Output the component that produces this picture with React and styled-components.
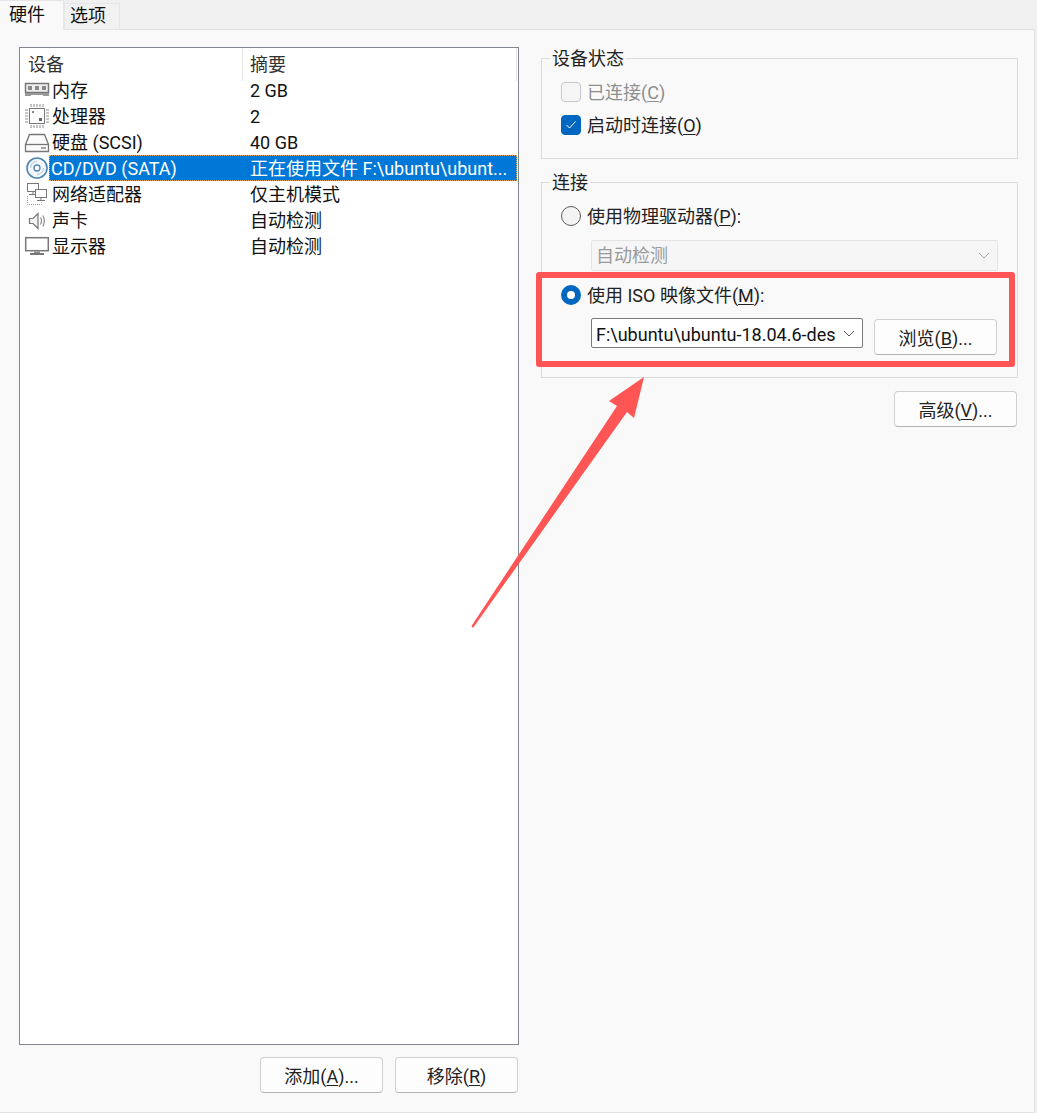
import React from "react";
import styled, { createGlobalStyle } from "styled-components";

const GlobalStyle = createGlobalStyle`
  html, body {
    margin: 0;
    padding: 0;
    background: #f0f0f0;
  }
  * {
    box-sizing: border-box;
  }
`;

const FONT = `Roboto, "Noto Sans CJK SC", sans-serif`;

const Page = styled.div`
  position: relative;
  width: 1037px;
  height: 1113px;
  display: flex;
  flex-direction: column;
  overflow: hidden;
  background: #f0f0f0;
  color: #111;
  font-family: ${FONT};
  font-size: 18px;
  line-height: 24px;
`;

const TabStrip = styled.div`
  height: 30px;
  display: flex;
  align-items: flex-end;
  margin-bottom: -1px;
  position: relative;
  z-index: 1;
`;

const Tab = styled.div`
  height: ${(p) => (p.$active ? "30px" : "27px")};
  width: ${(p) => (p.$active ? "64px" : "56px")};
  padding-left: ${(p) => (p.$active ? "9px" : "5px")};
  background: ${(p) => (p.$active ? "#f9f9f9" : "#f1f1f1")};
  border: 1px solid #e6e6e6;
  border-left-width: ${(p) => (p.$active ? "0" : "1px")};
  border-bottom: ${(p) => (p.$active ? "none" : "1px solid #e6e6e6")};
  line-height: ${(p) => (p.$active ? "27px" : "24px")};
`;

const Panel = styled.div`
  flex: 1;
  min-height: 0;
  margin-right: 2px;
  display: flex;
  gap: 22px;
  padding: 17px 16px 19px 19px;
  background: #f9f9f9;
  border-top: 1px solid #e2e2e2;
  border-bottom: 1px solid #e2e2e2;
  border-right: 1px solid #e2e2e2;
`;

const LeftColumn = styled.div`
  width: 500px;
  display: flex;
  flex-direction: column;
  gap: 12px;
`;

const RightColumn = styled.div`
  width: 477px;
  padding-top: 1px;
  display: flex;
  flex-direction: column;
  align-items: flex-end;
`;

const DeviceList = styled.div`
  flex: 1;
  background: #fff;
  border: 1px solid #82878f;
`;

const ListHeader = styled.div`
  height: 29px;
  display: grid;
  grid-template-columns: 222px 275px;
  margin-right: 1px;
`;

const HeaderCell = styled.div`
  padding-left: ${(p) => (p.$first ? "8px" : "7px")};
  border-left: ${(p) => (p.$first ? "none" : "1px solid #e5e5e5")};
  border-right: ${(p) => (p.$first ? "none" : "1px solid #e5e5e5")};
  color: #333;
  line-height: 33px;
`;

const Row = styled.div`
  height: 26px;
  display: flex;
  padding-right: 1px;
`;

const IconCell = styled.div`
  width: 29px;
  padding-left: 4px;
  flex: none;

  svg {
    display: block;
  }
`;

const RowBody = styled.div`
  flex: 1;
  display: grid;
  grid-template-columns: 193px 275px;
  height: 26px;
  line-height: 28px;
  background: ${(p) => (p.$selected ? "#0078d7" : "transparent")};
  color: ${(p) => (p.$selected ? "#fff" : "#111")};
  outline: ${(p) => (p.$selected ? "1px dotted #e8a860" : "none")};
  outline-offset: -1px;
`;

const NameCell = styled.div`
  padding-left: ${(p) => (p.$selected ? "2px" : "3px")};
  white-space: nowrap;
`;

const SummaryCell = styled.div`
  padding-left: 8px;
  white-space: nowrap;
  overflow: hidden;
`;

const ButtonRow = styled.div`
  display: flex;
  justify-content: flex-end;
  gap: 12px;
  padding-right: 1px;
`;

const Button = styled.div`
  width: 123px;
  height: 36px;
  padding-top: 3px;
  flex: none;
  display: flex;
  align-items: center;
  justify-content: center;
  background: #fdfdfd;
  border: 1px solid #d0d0d0;
  border-bottom-color: #b4b4b4;
  border-radius: 4px;
  color: #222;
`;

const Group = styled.fieldset`
  width: 100%;
  margin: 0 0 13px;
  padding: 14px 19px ${(p) => p.$bottom}px;
  border: 1px solid #dcdcdc;
  min-width: 0;
`;

const Legend = styled.legend`
  margin-left: -11px;
  padding: 0 2px;
  height: 20px;
  line-height: 22px;
  color: #222;
`;

const OptionRow = styled.div`
  height: 20px;
  display: flex;
  align-items: center;
  gap: 6px;
  margin-bottom: ${(p) => p.$gap || 0}px;
  color: ${(p) => (p.$disabled ? "#8f8f8f" : "#222")};
  white-space: pre;
`;

const OptionLabel = styled.span`
  padding-top: 2px;
`;

const CheckBox = styled.span`
  width: 20px;
  height: 20px;
  flex: none;
  display: flex;
  align-items: center;
  justify-content: center;
  border-radius: 4px;
  background: ${(p) => (p.$checked ? "#0067c0" : "#f6f6f6")};
  border: 1px solid ${(p) => (p.$checked ? "#0067c0" : "#c8c8c8")};
`;

const Radio = styled.span`
  width: 20px;
  height: 20px;
  flex: none;
  border-radius: 50%;
  background: ${(p) => (p.$checked ? "#fff" : "#f3f3f3")};
  border: ${(p) => (p.$checked ? "6px solid #0067c0" : "1px solid #5c5c5c")};
`;

const DisabledSelect = styled.div`
  width: 407px;
  height: 31px;
  margin: 0 0 14px 30px;
  padding: 0 7px 0 4px;
  display: flex;
  align-items: center;
  justify-content: space-between;
  background: #f6f6f6;
  border: 1px solid #e4e4e4;
  border-radius: 2px;
  color: #9a9a9a;
`;

const FileRow = styled.div`
  display: flex;
  align-items: flex-start;
  gap: 11px;
  margin: 13px 0 0 30px;
`;

const FileSelect = styled.div`
  width: 272px;
  height: 30px;
  padding: 0 7px 0 4px;
  flex: none;
  display: flex;
  align-items: center;
  justify-content: space-between;
  background: #fff;
  border: 1px solid #7a7a7a;
  border-radius: 2px;
  color: #111;
`;

const FileValue = styled.span`
  width: 239px;
  padding-top: 3px;
  overflow: hidden;
  white-space: nowrap;
`;

const BrowseButton = styled(Button)`
  margin-top: 1px;
`;

const AdvancedButton = styled(Button)`
  margin-right: 1px;
`;

const Key = styled.span`
  text-decoration: underline;
  text-underline-offset: 2px;
`;

const Highlight = styled.div`
  position: absolute;
  left: 536px;
  top: 272px;
  width: 479px;
  height: 95px;
  border: 6px solid #ff5555;
  border-radius: 3px;
  pointer-events: none;
`;

const ArrowOverlay = styled.svg`
  position: absolute;
  left: 0;
  top: 0;
  pointer-events: none;
`;

const Chevron = ({ color }) => (
  <svg width="12" height="7" viewBox="0 0 12 7" fill="none">
    <path d="M1 1l5 5 5-5" stroke={color} strokeWidth="1" />
  </svg>
);

const MemoryIcon = () => (
  <svg width="26" height="26" viewBox="0 0 26 26" fill="none">
    <rect x="1.5" y="6.5" width="23" height="9" fill="#eee" stroke="#777" strokeWidth="1.5" />
    <rect x="4" y="9" width="4" height="4" fill="#888" />
    <rect x="11" y="9" width="4" height="4" fill="#888" />
    <rect x="18" y="9" width="4" height="4" fill="#888" />
    <path d="M1 16h24v3H19v-1H7v1H1z" fill="#999" />
  </svg>
);

const CpuIcon = () => (
  <svg width="26" height="26" viewBox="0 0 26 26" fill="none">
    <rect x="5.5" y="5.5" width="15" height="15" fill="#fff" stroke="#777" />
    <path d="M1 7h3M1 10h3M1 13h3M1 16h3M1 19h3M22 7h3M22 10h3M22 13h3M22 16h3M22 19h3M7 1v3M10 1v3M13 1v3M16 1v3M19 1v3M7 22v3M10 22v3M13 22v3M16 22v3M19 22v3" stroke="#8a8a8a" />
    <rect x="8" y="8" width="2" height="2" fill="#888" />
    <rect x="15" y="15" width="3" height="3" fill="#666" />
  </svg>
);

const DiskIcon = () => (
  <svg width="26" height="26" viewBox="0 0 26 26" fill="none">
    <path d="M5.5 5.5h15l4 10v7h-23v-7z" fill="#fbfbfb" stroke="#777" strokeWidth="1.3" />
    <path d="M2 15.5h22" stroke="#777" strokeWidth="1.3" />
    <path d="M17 19h5" stroke="#888" strokeWidth="1.5" />
  </svg>
);

const CdIcon = () => (
  <svg width="26" height="26" viewBox="0 0 26 26" fill="none">
    <circle cx="13" cy="13" r="10" fill="#f4f8fb" stroke="#4d86b5" strokeWidth="1.6" />
    <circle cx="13" cy="13" r="3" fill="#fff" stroke="#4d86b5" strokeWidth="1.3" />
    <path d="M6.5 13a6.5 6.5 0 0 1 6.5-6.5M19.5 13a6.5 6.5 0 0 1-6.5 6.5" stroke="#a9c4da" />
  </svg>
);

const NetworkIcon = () => (
  <svg width="26" height="26" viewBox="0 0 26 26" fill="none">
    <rect x="3.5" y="2.5" width="11" height="8" fill="#fff" stroke="#777" />
    <path d="M9 11v2M5 13.5h8" stroke="#777" />
    <rect x="11.5" y="8.5" width="11" height="8" fill="#fff" stroke="#777" />
    <path d="M17 17v2M13 19.5h8" stroke="#777" />
    <path d="M3.5 15v8.5h14v-2" stroke="#999" strokeDasharray="1 1" />
  </svg>
);

const SpeakerIcon = () => (
  <svg width="26" height="26" viewBox="0 0 26 26" fill="none">
    <path d="M5.5 11.5H9l5-5v15l-5-5H5.5z" fill="#f3f3f3" stroke="#777" strokeWidth="1.2" />
    <path d="M16.5 10.5c1.2 2 1.2 5 0 7M18.8 8.5c2 3 2 8 0 11" stroke="#8a8a8a" strokeWidth="1.2" />
  </svg>
);

const MonitorIcon = () => (
  <svg width="26" height="26" viewBox="0 0 26 26" fill="none">
    <rect x="1.7" y="4.7" width="22.6" height="13" fill="#fff" stroke="#777" strokeWidth="1.5" />
    <path d="M10 18.5h6v1.5h-6z" fill="#888" />
    <path d="M6 20h14v2H6z" fill="#777" />
  </svg>
);

const devices = [
  { icon: MemoryIcon, name: "内存", summary: "2 GB" },
  { icon: CpuIcon, name: "处理器", summary: "2" },
  { icon: DiskIcon, name: "硬盘 (SCSI)", summary: "40 GB" },
  { icon: CdIcon, name: "CD/DVD (SATA)", summary: "正在使用文件 F:\\ubuntu\\ubunt...", selected: true },
  { icon: NetworkIcon, name: "网络适配器", summary: "仅主机模式" },
  { icon: SpeakerIcon, name: "声卡", summary: "自动检测" },
  { icon: MonitorIcon, name: "显示器", summary: "自动检测" },
];

const App = () => (
  <Page>
    <GlobalStyle />
    <TabStrip>
      <Tab $active>硬件</Tab>
      <Tab>选项</Tab>
    </TabStrip>
    <Panel>
      <LeftColumn>
        <DeviceList>
          <ListHeader>
            <HeaderCell $first>设备</HeaderCell>
            <HeaderCell>摘要</HeaderCell>
          </ListHeader>
          {devices.map((d) => (
            <Row key={d.name}>
              <IconCell>
                <d.icon />
              </IconCell>
              <RowBody $selected={d.selected}>
                <NameCell $selected={d.selected}>{d.name}</NameCell>
                <SummaryCell>{d.summary}</SummaryCell>
              </RowBody>
            </Row>
          ))}
        </DeviceList>
        <ButtonRow>
          <Button>
            <span>
              添加(<Key>A</Key>)...
            </span>
          </Button>
          <Button>
            <span>
              移除(<Key>R</Key>)
            </span>
          </Button>
        </ButtonRow>
      </LeftColumn>
      <RightColumn>
        <Group $bottom={23}>
          <Legend>设备状态</Legend>
          <OptionRow $disabled $gap={13}>
            <CheckBox />
            <OptionLabel>
              已连接(<Key>C</Key>)
            </OptionLabel>
          </OptionRow>
          <OptionRow>
            <CheckBox $checked>
              <svg width="12" height="10" viewBox="0 0 12 10" fill="none">
                <path d="M1.5 5l3 3 6-6.5" stroke="#fff" strokeWidth="1" />
              </svg>
            </CheckBox>
            <OptionLabel>
              启动时连接(<Key>O</Key>)
            </OptionLabel>
          </OptionRow>
        </Group>
        <Group $bottom={22}>
          <Legend>连接</Legend>
          <OptionRow $gap={14}>
            <Radio />
            <OptionLabel>
              使用物理驱动器(<Key>P</Key>):
            </OptionLabel>
          </OptionRow>
          <DisabledSelect>
            <span>自动检测</span>
            <Chevron color="#a8a8a8" />
          </DisabledSelect>
          <OptionRow>
            <Radio $checked />
            <OptionLabel>
              使用 ISO 映像文件(<Key>M</Key>):
            </OptionLabel>
          </OptionRow>
          <FileRow>
            <FileSelect>
              <FileValue>F:\ubuntu\ubuntu-18.04.6-desktop-amd64.iso</FileValue>
              <Chevron color="#555" />
            </FileSelect>
            <BrowseButton>
              <span>
                浏览(<Key>B</Key>)...
              </span>
            </BrowseButton>
          </FileRow>
        </Group>
        <AdvancedButton>
          <span>
            高级(<Key>V</Key>)...
          </span>
        </AdvancedButton>
      </RightColumn>
    </Panel>
    <Highlight />
    <ArrowOverlay width="1037" height="1113" viewBox="0 0 1037 1113">
      <path d="M644 377L609 401L617 406L471.5 626L473 628L627 412L634 418Z" fill="#ff5555" />
    </ArrowOverlay>
  </Page>
);

export default App;
